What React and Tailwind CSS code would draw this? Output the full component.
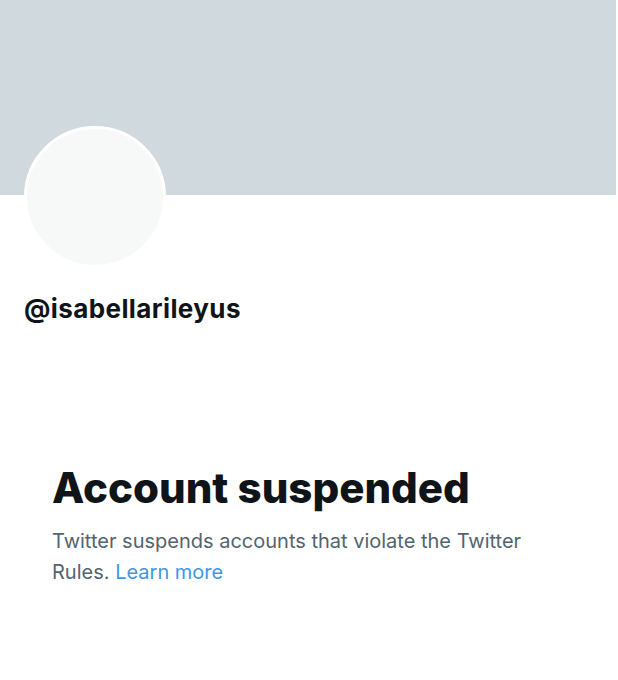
export default function App() {
  return (
    <div className="w-[618px] h-[680px] bg-white overflow-hidden" style={{ fontFamily: 'Inter, "Liberation Sans", sans-serif' }}>
      <div className="h-[195px] w-[616px] bg-[#cfd9de]" />
      <div className="px-[24px]">
        <div className="-mt-[69px] w-[142px] h-[142px] rounded-full bg-[#f7f9f9] border-[3px] border-white" />
        <div className="mt-[26px] text-[26px] leading-[30px] tracking-[0.4px] font-bold text-[#0f1419]">@isabellarileyus</div>
      </div>
      <div className="px-[52px] mt-[140px]">
        <h1 className="text-[42px] leading-[48px] font-extrabold text-[#0f1419]">Account suspended</h1>
        <p className="mt-[14px] text-[20px] leading-[31px] text-[#536471]">
          Twitter suspends accounts that violate the Twitter
          <br />
          Rules. <span className="text-[#3f97e5]">Learn more</span>
        </p>
      </div>
    </div>
  );
}
